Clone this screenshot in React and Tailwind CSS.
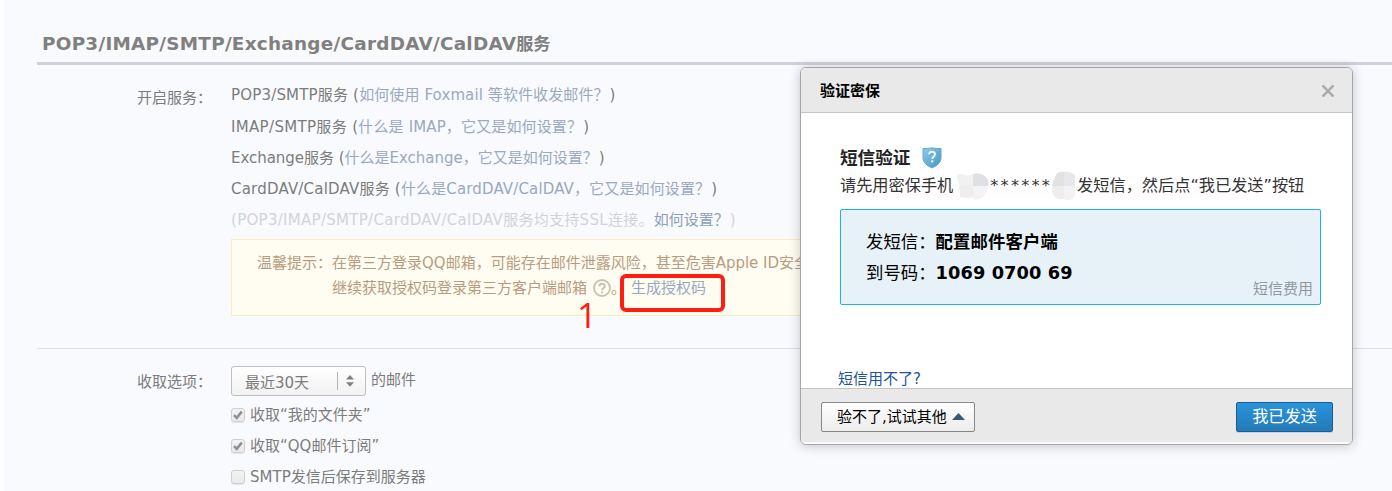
const SANS = "font-['DejaVu_Sans','Noto_Sans_CJK_SC',sans-serif]";

function ServiceRow({ name, nameClass = "", linkClass = "", children }) {
  return (
    <div className="flex h-[31.3px] items-center whitespace-pre">
      <span className={nameClass}>{name} (</span>
      <span className={`text-[#9aa9c0] ${linkClass}`}>{children}</span>
      <span className="ml-[1px]">)</span>
    </div>
  );
}

function CheckRow({ checked, children }) {
  return (
    <div className="flex h-[31.3px] items-center whitespace-pre">
      <span className="flex h-[14px] w-[14px] items-center justify-center rounded-[3px] border border-[#cfcfd1] bg-linear-to-b from-[#f3f3f3] to-[#e9e9ea] shadow-[0_1px_1px_#e4e5e8]">
        {checked && (
          <svg width="10" height="10" viewBox="0 0 10 10" fill="none" stroke="#8e8e8e" strokeWidth="2.5">
            <path d="M1 5.2 L3.7 7.8 L8.8 1.6" />
          </svg>
        )}
      </span>
      <span className="ml-[5px]">{children}</span>
    </div>
  );
}

function FieldLabel({ children }) {
  return <div className="w-[194px] shrink-0 pl-[100px] pt-[23px]">{children}</div>;
}

function Shield() {
  return (
    <svg className="ml-[12px]" width="20" height="22" viewBox="0 0 20 22">
      <defs>
        <linearGradient id="shield" x1="0" y1="0" x2="1" y2="1">
          <stop offset="0" stopColor="#8ccbe6" />
          <stop offset="1" stopColor="#4796c4" />
        </linearGradient>
      </defs>
      <path
        d="M1 1.5 Q5.5 1.5 10 1 Q14.5 1.5 19 1.5 V11 Q19 17 10 21 Q1 17 1 11 Z"
        fill="url(#shield)"
        stroke="#5fa9cc"
        strokeWidth="1"
      />
      <path d="M7.2 7.3 C7.2 3.8 13 3.8 13 7.2 C13 9.6 10.2 9.3 10.2 12" fill="none" stroke="#fff" strokeWidth="1.8" />
      <rect x="9.2" y="13.4" width="2" height="2" fill="#fff" />
    </svg>
  );
}

function MaskLeft() {
  return (
    <svg width="34" height="28" viewBox="0 0 34 28">
      <path d="M1 5 Q1 1 6 2 Q11 5 17 2 V14 H4 Q1 9 1 5Z" fill="#f1f1f1" />
      <path d="M17 2 Q23 0 29 4 Q34 8 32 15 H17Z" fill="#dfe0e3" />
      <path d="M3 13 H17 V25 Q10 27 4 25Z" fill="#eeeeef" />
      <path d="M17 14 H32 Q32 20 28 24 Q23 29 17 27Z" fill="#f4f4f6" />
    </svg>
  );
}

function MaskRight() {
  return (
    <svg width="24" height="30" viewBox="0 0 24 30">
      <path d="M4 4 Q6 0 12 1 V15 H0 Q1 9 4 4Z" fill="#e2e2e2" />
      <path d="M12 1 Q18 0 23 4 V15 H12Z" fill="#e7e8ec" />
      <path d="M0 15 H12 V28 Q2 29 0 21Z" fill="#ededed" />
      <path d="M12 15 H23 V22 Q23 28 18 29 Q15 30 12 28Z" fill="#f4f3f3" />
    </svg>
  );
}

function Dialog() {
  return (
    <section className="absolute left-[800px] top-[67px] flex h-[378px] w-[553px] flex-col overflow-hidden rounded-[6px] border border-[#a5a6a8] bg-white text-[15px] leading-[20px] text-black shadow-[0_1px_12px_rgba(0,0,0,0.22)]">
      <header className="flex h-[45px] shrink-0 items-center justify-between border-b border-[#c5c5c5] bg-[#e9e9e9] pl-[19px] pr-[18px]">
        <span className="pt-[1px] font-bold">验证密保</span>
        <svg className="mt-[2px]" width="12" height="12" viewBox="0 0 12 12" stroke="#aaaaaa" strokeWidth="2.6">
          <path d="M.5 .5 L11.5 11.5 M11.5 .5 L.5 11.5" />
        </svg>
      </header>
      <div className="flex h-[275px] shrink-0 flex-col pl-[39px]">
        <div className="mt-[33px] flex h-[24px] shrink-0 items-center">
          <span className="text-[17.6px] font-bold text-[#222]">短信验证</span>
          <Shield />
        </div>
        <div className="mt-[1px] flex h-[30px] shrink-0 items-center whitespace-pre text-[16.2px] text-[#333]">
          <span>请先用密保手机</span>
          <span className="ml-[3px] flex"><MaskLeft /></span>
          <span className="tracking-[2.2px]">******</span>
          <span className="flex"><MaskRight /></span>
          <span className="ml-[1px]">发短信，然后点“我已发送”按钮</span>
        </div>
        <div className="mt-[8px] flex h-[96px] w-[481px] shrink-0 flex-col rounded-[2px] border border-[#1fb0ec] bg-[#e7f2f8] pl-[25px] pt-[17px] text-[17.4px] leading-[30px]">
          <div className="flex whitespace-pre">
            <span>发短信：</span>
            <b className="tracking-[0.1px]">配置邮件客户端</b>
          </div>
          <div className="flex whitespace-pre">
            <span className="pt-[1px]">到号码：</span>
            <b className="pt-[1px] text-[17.8px] tracking-[0.08px]">1069 0700 69</b>
          </div>
          <div className="-mt-[9px] self-end pr-[7px] text-[15px] leading-[20px] text-[#8d999f]">短信费用</div>
        </div>
        <a className="-ml-[2px] mt-[64px] shrink-0 text-[#205399]">短信用不了?</a>
      </div>
      <footer className="flex h-[55px] shrink-0 justify-between border-t border-[#c5c5c5] bg-[#e9e9e9] pl-[20px] pr-[19px] pt-[13px] shadow-[inset_0_-1px_0_#f8f8f8]">
        <button className="flex h-[30px] w-[154px] items-center rounded-[2px] border border-[#888] bg-linear-to-b from-white to-[#ececec] pl-[15px]">
          <span>验不了,试试其他</span>
          <svg className="-mt-[2px] ml-[5px]" width="13" height="7" viewBox="0 0 13 7">
            <path d="M0 7 L6.5 0 L13 7Z" fill="#3b596e" />
          </svg>
        </button>
        <button className="flex h-[30px] w-[97px] items-center justify-center rounded-[2px] border border-[#1d5d8c] bg-linear-to-b from-[#2994dc] to-[#247ab8] text-[16.2px] text-white shadow-[0_1px_0_#c9d3da]">
          我已发送
        </button>
      </footer>
    </section>
  );
}

export default function App() {
  return (
    <main className={`relative h-[491px] w-[1392px] overflow-hidden bg-white pl-[4px] text-[15px] leading-[20px] text-[#7c7c7c] ${SANS}`}>
      <div className="flex h-full flex-col bg-[#f9fafd] pl-[33px]">
        <h1 className="flex h-[65px] shrink-0 items-end border-b-[3px] border-[#cfd0d9] pb-[6px] pl-[5px] text-[17.2px] font-bold leading-[24px] text-[#808080]">
          <span className="text-[18.4px] tracking-[0.26px]">POP3/IMAP/SMTP/Exchange/CardDAV/CalDAV</span>
          <span>服务</span>
        </h1>
        <div className="flex h-[284px] shrink-0 border-b border-[#dcdfe9]">
          <FieldLabel>开启服务：</FieldLabel>
          <div className="grow pt-[14.6px]">
            <ServiceRow name="POP3/SMTP服务" nameClass="tracking-[0.18px]" linkClass="tracking-[0.1px]">如何使用 Foxmail 等软件收发邮件？</ServiceRow>
            <ServiceRow name="IMAP/SMTP服务" nameClass="tracking-[0.33px]" linkClass="tracking-[0.14px]">什么是 IMAP，它又是如何设置？</ServiceRow>
            <ServiceRow name="Exchange服务" nameClass="tracking-[-0.04px]">什么是Exchange，它又是如何设置？</ServiceRow>
            <ServiceRow name="CardDAV/CalDAV服务" nameClass="tracking-[0.2px]" linkClass="tracking-[0.14px]">什么是CardDAV/CalDAV，它又是如何设置？</ServiceRow>
            <div className="flex h-[31.3px] items-center whitespace-pre text-[#d2d3d8]">
              <span className="tracking-[0.29px]">(POP3/IMAP/SMTP/CardDAV/CalDAV服务均支持SSL连接。</span>
              <span className="text-[#8f9fb8]">如何设置？</span>
              <span className="ml-[1px]">)</span>
            </div>
            <div className="mt-[2.9px] flex h-[77px] w-[900px] border border-[#faebc0] bg-[#fffdf1] pl-[25px] pt-[11px] leading-[25px] text-[#b89b80]">
              <span className="shrink-0">温馨提示：</span>
              <div className="whitespace-pre">
                <div>在第三方登录QQ邮箱，可能存在邮件泄露风险，甚至危害Apple ID安全</div>
                <div className="flex items-center">
                  <span>继续获取授权码登录第三方客户端邮箱</span>
                  <svg className="ml-[6px]" width="18" height="18" viewBox="0 0 18 18" fill="none" stroke="#c5c2ae">
                    <circle cx="9" cy="9" r="8" strokeWidth="1.8" />
                    <path d="M6.3 7.2 C6.3 3.8 11.8 3.9 11.8 7 C11.8 9 9.1 8.8 9.1 11.3" strokeWidth="2" />
                    <path d="M9.1 12.5 V14.3" strokeWidth="2" />
                  </svg>
                  <span>。</span>
                  <span className="ml-[5px] text-[#97a7c2]">生成授权码</span>
                </div>
              </div>
            </div>
          </div>
        </div>
        <div className="flex">
          <FieldLabel>收取选项：</FieldLabel>
          <div className="pt-[17px]">
            <div className="flex h-[30px] items-center">
              <div className="flex h-[30px] w-[135px] items-center rounded-[3px] border border-[#bfbfc1] bg-linear-to-b from-white to-[#f2f2f3] pl-[13px]">
                <span className="w-[92px] pt-[4px]">最近30天</span>
                <span className="h-[18px] w-[1px] bg-[#b5b5b5]" />
                <svg className="ml-[8px]" width="8" height="12" viewBox="0 0 8 12" fill="#7f7f7f">
                  <path d="M0 4.5 L4 0 L8 4.5Z M0 7.2 L4 11.7 L8 7.2Z" />
                </svg>
              </div>
              <span className="-mt-[3px] ml-[5px]">的邮件</span>
            </div>
            <div className="mt-[3px]">
              <CheckRow checked>收取“我的文件夹”</CheckRow>
              <CheckRow checked>收取“QQ邮件订阅”</CheckRow>
              <CheckRow>SMTP发信后保存到服务器</CheckRow>
            </div>
          </div>
        </div>
      </div>
      <div className="absolute left-[620px] top-[274px] h-[38px] w-[105px] rounded-[6px] border-[4px] border-[#ff1d12]" />
      <div className="absolute left-[577px] top-[296px] font-['Open_Sans',sans-serif] text-[35px] font-medium leading-[38px] text-[#ff1d12]">1</div>
      <Dialog />
    </main>
  );
}
